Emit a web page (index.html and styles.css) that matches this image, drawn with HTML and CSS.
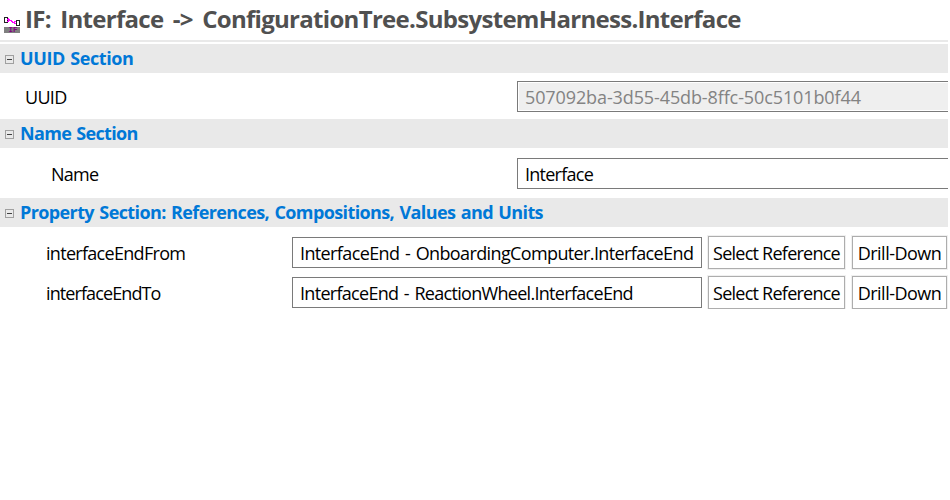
FILE: index.html
```
<!DOCTYPE html>
<html lang="en">
<head>
<meta charset="utf-8">
<title>Interface</title>
<link rel="stylesheet" href="styles.css">
</head>
<body>
<main class="editor">
  <header class="title-bar">
    <svg class="icon" width="16" height="16" viewBox="0 0 16 16" shape-rendering="crispEdges">
      <path d="M.5.5h3v5h-3zM12.500 3.500h3v5h-3z" fill="#fff" stroke="#222"/>
      <path d="M4 1h1v1h1v1h2v1h1v1h1v-1h2v1h-1v1h1v1h-2v-1h-2v-1h-1v-1h-2v1h-2v-1h1v-1h-1z" fill="#f0f"/>
      <path d="M0 10h16v6H0z" fill="#808080"/>
      <text class="icon-text" x="4.500" y="15.300">IF</text>
    </svg>
    <h1 class="title">IF: Interface -&gt; ConfigurationTree.SubsystemHarness.Interface</h1>
  </header>

  <h2 class="section"><span class="toggle"></span><span class="heading s-uuid">UUID Section</span></h2>
  <div class="row row-uuid">
    <span class="label l-uuid">UUID</span>
    <div class="field disabled open"><span class="v-uuid">507092ba-3d55-45db-8ffc-50c5101b0f44</span></div>
  </div>

  <h2 class="section"><span class="toggle"></span><span class="heading s-name">Name Section</span></h2>
  <div class="row row-name">
    <span class="label l-name">Name</span>
    <div class="field open"><span class="v-name">Interface</span></div>
  </div>

  <h2 class="section"><span class="toggle"></span><span class="heading s-prop">Property Section: References, Compositions, Values and Units</span></h2>
  <div class="refs">
    <span class="label l-from">interfaceEndFrom</span>
    <div class="field"><span class="v-from">InterfaceEnd - OnboardingComputer.InterfaceEnd</span></div>
    <button class="btn b-select">Select Reference</button>
    <button class="btn b-drill">Drill-Down</button>
    <span class="label l-to">interfaceEndTo</span>
    <div class="field"><span class="v-to">InterfaceEnd - ReactionWheel.InterfaceEnd</span></div>
    <button class="btn b-select">Select Reference</button>
    <button class="btn b-drill">Drill-Down</button>
  </div>
</main>
</body>
</html>
```
FILE: styles.css
```
* { box-sizing: border-box; }
body {
  margin: 0;
  background: #fff;
  color: #000;
  font: 18px/24px "Open Sans", "Noto Sans", sans-serif;
  letter-spacing: -0.4px;
  white-space: nowrap;
}
.editor { width: 948px; overflow: hidden; }
.title-bar {
  display: flex;
  height: 42px;
  margin-bottom: 2px;
  padding-left: 4px;
  border-bottom: 2px solid #e9e9e9;
}
.icon { flex: none; margin-top: 17px; overflow: visible; }
.icon-text { font: bold 7.500px "Liberation Mono", monospace; fill: #800080; letter-spacing: 0; }
.title {
  margin: 3px 0 0 5px;
  color: #505050;
  font-size: 24px;
  font-weight: 700;
  line-height: 32px;
  letter-spacing: -0.7px;
  word-spacing: 3.8px;
}
.section {
  display: flex;
  align-items: center;
  height: 29px;
  margin: 0;
  padding-left: 5px;
  background: #e9e9e9;
  color: #0078d7;
  font-size: 18px;
  font-weight: 700;
  letter-spacing: -0.6px;
}
.heading { padding-bottom: 2px; word-spacing: 1px; }
.s-uuid { letter-spacing: -0.4px; }
.s-name { letter-spacing: -0.65px; }
.s-prop { letter-spacing: -0.61px; word-spacing: 1.3px; }
.toggle {
  display: flex;
  align-items: center;
  justify-content: center;
  width: 9px;
  height: 9px;
  margin: 2px 6px 0 0;
  border: 1px solid #a0a0a0;
}
.toggle::before { content: ""; width: 5px; height: 1px; background: #404040; }
.row {
  display: grid;
  grid-template-columns: 517px 431px;
  height: 46px;
  padding-top: 8px;
}
.row-name { height: 50px; padding-top: 10px; }
.label { line-height: 33px; }
.l-uuid { padding-left: 25px; letter-spacing: -0.7px; }
.l-name { padding-left: 51px; letter-spacing: -0.75px; }
.v-uuid { letter-spacing: -0.11px; }
.v-name { letter-spacing: -0.75px; }
.l-from { letter-spacing: -0.7px; }
.l-to { letter-spacing: -0.9px; }
.v-from { letter-spacing: -0.62px; word-spacing: 1.5px; }
.v-to { letter-spacing: -0.7px; word-spacing: 1.5px; }
.field {
  height: 31px;
  padding-left: 7px;
  border: 1px solid #7a7a7a;
  line-height: 31px;
}
.open { border-right: 0; }
.disabled { background: #efefef; box-shadow: inset 1px 1px #fff, inset 0 -1px #fff; color: #838383; }
.refs {
  display: grid;
  grid-template-columns: 246px 416px 144px 95px;
  grid-auto-rows: 33px;
  align-items: center;
  row-gap: 7px;
  padding: 9px 1px 0 46px;
}
.refs .label { padding-top: 2px; }
.refs .field { width: 410px; }
.btn {
  height: 33px;
  padding: 0;
  border: 1px solid #adadad;
  background: #fff;
  box-shadow: 0 0 0 1px #f0f0f0;
  color: #000;
  font: inherit;
  letter-spacing: -0.5px;
}
.b-select { width: 137px; letter-spacing: -0.75px; }
.b-drill { width: 95px; }
```
